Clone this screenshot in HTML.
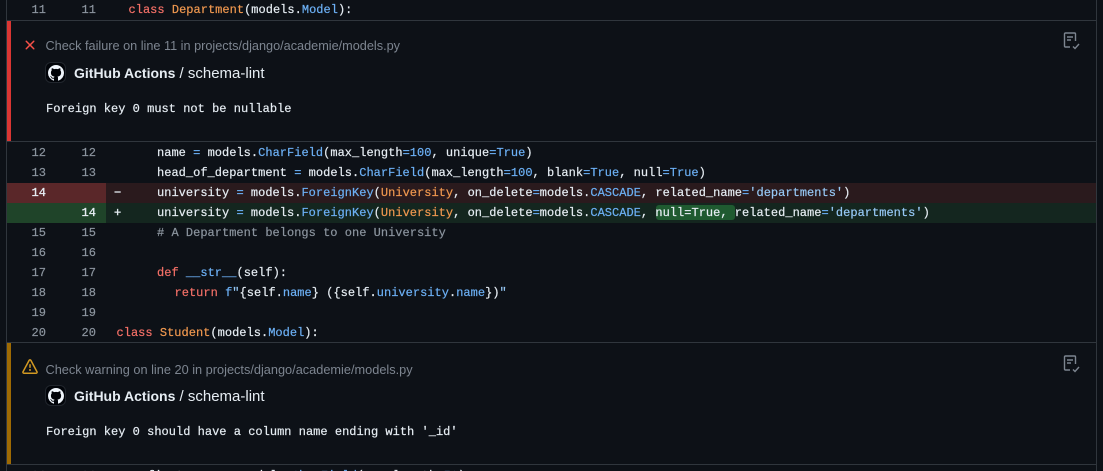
<!DOCTYPE html>
<html><head><meta charset="utf-8">
<style>
html,body{margin:0;padding:0;background:#0d1117;width:1103px;height:471px;overflow:hidden}
#p{position:relative;width:1103px;height:471px;overflow:hidden;background:#0d1117;font-family:"Liberation Mono",monospace;font-size:12px;letter-spacing:.02px;color:#e6edf3;-webkit-text-stroke:.2px}
.a{position:absolute}
.r{position:absolute;left:7px;width:1089px;height:20px;line-height:20px;white-space:pre}
.n{position:absolute;top:0;color:#8b949e;width:15px}
.n1{left:24.5px}.n2{left:74.5px}
.c{position:absolute;left:150px;top:0}
.k{color:#f47067}.t{color:#f0984f}.b{color:#6cb0f5}.s{color:#96c8f5}.m{color:#8b949e}
.h{position:absolute;height:1px;left:6px;width:1091px;background:#30363d}
.v{position:absolute;width:1px;top:0;height:471px;background:#30363d}
.sans{font-family:"Liberation Sans",sans-serif;white-space:pre;letter-spacing:0;-webkit-text-stroke:0}
.msg{position:absolute;left:46px;white-space:pre;line-height:20px;color:#e6edf3}
.sl{font-size:15px}
</style></head><body><div id="p">
<div class="v" style="left:6px"></div><div class="v" style="left:1096px"></div>

<div class="r" style="top:0"><span class="n n1">11</span><span class="n n2">11</span><span class="c" style="left:121.5px"><span class="k">class</span> <span class="t">Department</span>(models.<span class="b">Model</span>):</span></div>
<div class="h" style="top:20px"></div>

<div class="a" style="left:7px;top:21px;width:4px;height:120px;background:#da3633"></div>
<svg class="a" style="left:22px;top:37px" width="16" height="16" viewBox="0 0 16 16" fill="#f85149"><path d="M3.72 3.72a.75.75 0 0 1 1.06 0L8 6.94l3.22-3.22a.749.749 0 0 1 1.275.326.749.749 0 0 1-.215.734L9.06 8l3.22 3.22a.749.749 0 0 1-.326 1.275.749.749 0 0 1-.734-.215L8 9.06l-3.22 3.22a.751.751 0 0 1-1.042-.018.751.751 0 0 1-.018-1.042L6.94 8 3.72 4.78a.75.75 0 0 1 0-1.06Z"/></svg>
<div class="a sans" style="left:45.5px;top:38px;font-size:12.7px;line-height:17px;color:#7d8590">Check failure on line 11 in projects/django/academie/models.py</div>
<div class="a" style="left:45px;top:62px;width:21px;height:21px;border-radius:6px;background:#010409;border:1px solid #21262d;box-sizing:border-box"></div>
<svg class="a" style="left:47.5px;top:64.5px" width="16" height="16" viewBox="0 0 16 16" fill="#f0f6fc"><path d="M8 0c4.42 0 8 3.58 8 8a8.013 8.013 0 0 1-5.45 7.59c-.4.08-.55-.17-.55-.38 0-.27.01-1.13.01-2.2 0-.75-.25-1.23-.54-1.48 1.78-.2 3.65-.88 3.65-3.95 0-.88-.31-1.59-.82-2.15.08-.2.36-1.02-.08-2.12 0 0-.67-.22-2.2.82-.64-.18-1.32-.27-2-.27-.68 0-1.36.09-2 .27-1.53-1.03-2.2-.82-2.2-.82-.44 1.1-.16 1.92-.08 2.12-.51.56-.82 1.28-.82 2.15 0 3.06 1.86 3.75 3.64 3.95-.23.2-.44.55-.5 1.07-.46.21-1.61.55-2.33-.66-.15-.24-.6-.83-1.23-.82-.67.01-.27.38.01.53.34.19.73.9.82 1.13.16.45.68 1.31 2.69.94 0 .67.01 1.3.01 1.49 0 .21-.15.45-.55.38A7.995 7.995 0 0 1 0 8c0-4.42 3.58-8 8-8Z"/></svg>
<div class="a sans" style="left:74px;top:64px;font-size:14px;line-height:18px;color:#e6edf3"><b>GitHub Actions</b><span class="sl"> / schema-lint</span></div>
<div class="msg" style="top:99px">Foreign key 0 must not be nullable</div>
<svg class="a" style="left:1063px;top:32px" width="18" height="18" viewBox="0 0 18 18" fill="none" stroke="#7d8590" stroke-width="1.4"><path d="M7 15H2.5Q1.5 15 1.5 14V2Q1.5 1 2.5 1H11.5Q12.500 1 12.500 2V9"/><path d="M4 5H10M4 8H8"/><path d="M10 14.500L12 16.500L16 12"/></svg>

<div class="h" style="top:141px"></div>

<div class="r" style="top:143px"><span class="n n1">12</span><span class="n n2">12</span><span class="c">name <span class="b">=</span> models.<span class="b">CharField</span>(max_length<span class="b">=100</span>, unique<span class="b">=True</span>)</span></div>
<div class="r" style="top:163px"><span class="n n1">13</span><span class="n n2">13</span><span class="c">head_of_department <span class="b">=</span> models.<span class="b">CharField</span>(max_length<span class="b">=100</span>, blank<span class="b">=True</span>, null<span class="b">=True</span>)</span></div>

<div class="a" style="left:7px;top:182.500px;width:1089px;height:20px;background:#2a1a1d"></div>
<div class="a" style="left:7px;top:182.500px;width:99px;height:20px;background:#5a2729"></div>
<div class="a" style="left:7px;top:202.500px;width:1089px;height:20px;background:#14261f"></div>
<div class="a" style="left:7px;top:202.500px;width:99px;height:20px;background:#1f4429"></div>
<div class="a" style="left:655.500px;top:205px;width:79px;height:15px;border-radius:3px;background:#1f5a30"></div>

<div class="r" style="top:183px"><span class="n n1" style="color:#e6edf3;-webkit-text-stroke:.35px">14</span><span class="a" style="left:107px;-webkit-text-stroke:.4px">−</span><span class="c">university <span class="b">=</span> models.<span class="b">ForeignKey</span>(<span class="t">University</span>, on_delete<span class="b">=</span>models.<span class="b">CASCADE</span>, related_name<span class="b">=</span><span class="s">'departments'</span>)</span></div>
<div class="r" style="top:203px"><span class="n n2" style="color:#e6edf3;-webkit-text-stroke:.35px">14</span><span class="a" style="left:107px;-webkit-text-stroke:.4px">+</span><span class="c">university <span class="b">=</span> models.<span class="b">ForeignKey</span>(<span class="t">University</span>, on_delete<span class="b">=</span>models.<span class="b">CASCADE</span>, null=True, related_name<span class="b">=</span><span class="s">'departments'</span>)</span></div>
<div class="r" style="top:223px"><span class="n n1">15</span><span class="n n2">15</span><span class="c m"># A Department belongs to one University</span></div>
<div class="r" style="top:243px"><span class="n n1">16</span><span class="n n2">16</span></div>
<div class="r" style="top:263px"><span class="n n1">17</span><span class="n n2">17</span><span class="c"><span class="k">def</span> <span class="b">__str__</span>(self):</span></div>
<div class="r" style="top:283px"><span class="n n1">18</span><span class="n n2">18</span><span class="c" style="left:167.500px"><span class="k">return</span> <span class="b">f</span><span class="s">"</span>{self.<span class="b">name</span>} ({self.<span class="b">university</span>.<span class="b">name</span>})<span class="s">"</span></span></div>
<div class="r" style="top:303px"><span class="n n1">19</span><span class="n n2">19</span></div>
<div class="r" style="top:323px"><span class="n n1">20</span><span class="n n2">20</span><span class="c" style="left:109.500px"><span class="k">class</span> <span class="t">Student</span>(models.<span class="b">Model</span>):</span></div>

<div class="h" style="top:342px"></div>
<div class="a" style="left:7px;top:343px;width:4px;height:121px;background:#9e6a03"></div>
<svg class="a" style="left:22px;top:359px" width="16" height="16" viewBox="0 0 16 16" fill="#d29922"><path d="M6.457 1.047c.659-1.234 2.427-1.234 3.086 0l6.082 11.378A1.75 1.75 0 0 1 14.082 15H1.918a1.75 1.75 0 0 1-1.543-2.575Zm1.763.707a.25.25 0 0 0-.44 0L1.698 13.132a.25.25 0 0 0 .22.368h12.164a.25.25 0 0 0 .22-.368Zm.53 3.996v2.5a.75.75 0 0 1-1.5 0v-2.5a.75.75 0 0 1 1.5 0ZM9 11a1 1 0 1 1-2 0 1 1 0 0 1 2 0Z"/></svg>
<div class="a sans" style="left:45.5px;top:361px;font-size:12.75px;line-height:17px;color:#7d8590">Check warning on line 20 in projects/django/academie/models.py</div>
<div class="a" style="left:45px;top:385px;width:21px;height:21px;border-radius:6px;background:#010409;border:1px solid #21262d;box-sizing:border-box"></div>
<svg class="a" style="left:47.5px;top:387.500px" width="16" height="16" viewBox="0 0 16 16" fill="#f0f6fc"><path d="M8 0c4.42 0 8 3.58 8 8a8.013 8.013 0 0 1-5.45 7.59c-.4.08-.55-.17-.55-.38 0-.27.01-1.13.01-2.2 0-.75-.25-1.23-.54-1.48 1.78-.2 3.65-.88 3.65-3.95 0-.88-.31-1.59-.82-2.15.08-.2.36-1.02-.08-2.12 0 0-.67-.22-2.2.82-.64-.18-1.32-.27-2-.27-.68 0-1.36.09-2 .27-1.53-1.03-2.2-.82-2.2-.82-.44 1.1-.16 1.92-.08 2.12-.51.56-.82 1.28-.82 2.15 0 3.06 1.86 3.75 3.64 3.95-.23.2-.44.55-.5 1.07-.46.21-1.61.55-2.33-.66-.15-.24-.6-.83-1.23-.82-.67.01-.27.38.01.53.34.19.73.9.82 1.13.16.45.68 1.31 2.69.94 0 .67.01 1.3.01 1.49 0 .21-.15.45-.55.38A7.995 7.995 0 0 1 0 8c0-4.42 3.58-8 8-8Z"/></svg>
<div class="a sans" style="left:74px;top:387px;font-size:14px;line-height:18px;color:#e6edf3"><b>GitHub Actions</b><span class="sl"> / schema-lint</span></div>
<div class="msg" style="top:422px">Foreign key 0 should have a column name ending with '_id'</div>
<svg class="a" style="left:1063px;top:355px" width="18" height="18" viewBox="0 0 18 18" fill="none" stroke="#7d8590" stroke-width="1.4"><path d="M7 15H2.5Q1.5 15 1.5 14V2Q1.5 1 2.5 1H11.5Q12.500 1 12.500 2V9"/><path d="M4 5H10M4 8H8"/><path d="M10 14.500L12 16.500L16 12"/></svg>
<div class="h" style="top:464px"></div>
<div class="r" style="top:466px"><span class="n n1">21</span><span class="n n2">21</span><span class="c" style="left:140.500px">first_name <span class="b">=</span> models.<span class="b">CharField</span>(max_length<span class="b">=50</span>)</span></div>
</div></body></html>
